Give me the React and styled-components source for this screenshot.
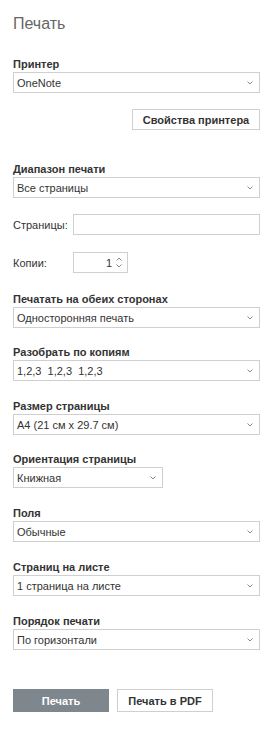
import React from "react";
import styled, { createGlobalStyle } from "styled-components";

const GlobalStyle = createGlobalStyle`
  body {
    margin: 0;
    background: #fff;
    font-family: "Liberation Sans", Arial, sans-serif;
    color: #333;
  }
`;

const Panel = styled.div`
  width: 272px;
  box-sizing: border-box;
  padding: 14px 12px 0 13px;
`;

const Title = styled.h1`
  margin: 0 0 23px;
  font-size: 16px;
  line-height: 20px;
  font-weight: normal;
  color: #666;
`;

const Section = styled.div`
  margin-bottom: ${({ $gap }) => $gap ?? 18}px;
`;

const Label = styled.div`
  font-size: 11px;
  line-height: 15px;
  font-weight: bold;
  color: #333;
`;

const SelectBox = styled.div`
  box-sizing: border-box;
  height: 21px;
  width: ${({ $width }) => $width || "100%"};
  border: 1px solid #cfcfcf;
  display: flex;
  align-items: center;
  justify-content: space-between;
  padding: 0 6px 0 3px;
  font-size: 11px;
  color: #333;
  background: #fff;
  white-space: pre;
`;

const Button = styled.button`
  box-sizing: border-box;
  height: ${({ $h }) => $h || 21}px;
  width: ${({ $w }) => $w}px;
  border: 1px solid ${({ $primary }) => ($primary ? "#7d878d" : "#cfcfcf")};
  background: ${({ $primary }) => ($primary ? "#7d878d" : "#fff")};
  color: ${({ $primary }) => ($primary ? "#fff" : "#333")};
  font-family: "Liberation Sans", Arial, sans-serif;
  font-size: 11px;
  font-weight: bold;
  padding: 0;
  cursor: pointer;
`;

const RightRow = styled.div`
  display: flex;
  justify-content: flex-end;
  margin: 16px 0 32px;
`;

const FieldRow = styled.div`
  display: flex;
  align-items: center;
  margin-bottom: ${({ $gap }) => $gap}px;
`;

const FieldLabel = styled.span`
  width: 60px;
  font-size: 11px;
  color: #333;
`;

const TextInput = styled.div`
  box-sizing: border-box;
  flex: 1;
  height: 21px;
  border: 1px solid #cfcfcf;
`;

const Spinner = styled.div`
  box-sizing: border-box;
  width: 55px;
  height: 21px;
  border: 1px solid #cfcfcf;
  display: flex;
  align-items: center;
  justify-content: flex-end;
  padding-right: 5px;
  gap: 4px;
  font-size: 11px;
`;

const Arrows = styled.div`
  display: flex;
  flex-direction: column;
  gap: 3px;
`;

const Actions = styled.div`
  display: flex;
  gap: 8px;
  margin-top: 39px;
`;

const Chevron = ({ up }) => (
  <svg width="6" height="4" viewBox="0 0 6 4">
    <path
      d={up ? "M0.5 3.5 L3 1 L5.5 3.5" : "M0.5 0.5 L3 3 L5.5 0.5"}
      fill="none"
      stroke="#8a8a8a"
      strokeWidth="1"
    />
  </svg>
);

const Select = ({ value, width }) => (
  <SelectBox $width={width}>
    <span>{value}</span>
    <Chevron />
  </SelectBox>
);

const sections = [
  { label: "Печатать на обеих сторонах", value: "Односторонняя печать", gap: 17 },
  { label: "Разобрать по копиям", value: "1,2,3  1,2,3  1,2,3", gap: 18 },
  { label: "Размер страницы", value: "A4 (21 см x 29.7 см)", gap: 17 },
  { label: "Ориентация страницы", value: "Книжная", width: "150px", gap: 18 },
  { label: "Поля", value: "Обычные", gap: 18 },
  { label: "Страниц на листе", value: "1 страница на листе", gap: 18 },
  { label: "Порядок печати", value: "По горизонтали", gap: 0 },
];

export default function App() {
  return (
    <Panel>
      <GlobalStyle />
      <Title>Печать</Title>

      <Section $gap={0}>
        <Label>Принтер</Label>
        <Select value="OneNote" />
      </Section>
      <RightRow>
        <Button $w={128}>Свойства принтера</Button>
      </RightRow>

      <Section $gap={16}>
        <Label>Диапазон печати</Label>
        <Select value="Все страницы" />
      </Section>
      <FieldRow $gap={17}>
        <FieldLabel>Страницы:</FieldLabel>
        <TextInput />
      </FieldRow>
      <FieldRow $gap={19}>
        <FieldLabel>Копии:</FieldLabel>
        <Spinner>
          <span>1</span>
          <Arrows>
            <Chevron up />
            <Chevron />
          </Arrows>
        </Spinner>
      </FieldRow>

      {sections.map((s) => (
        <Section key={s.label} $gap={s.gap}>
          <Label>{s.label}</Label>
          <Select value={s.value} width={s.width} />
        </Section>
      ))}

      <Actions>
        <Button $primary $w={96} $h={23}>
          Печать
        </Button>
        <Button $w={96} $h={23}>
          Печать в PDF
        </Button>
      </Actions>
    </Panel>
  );
}
